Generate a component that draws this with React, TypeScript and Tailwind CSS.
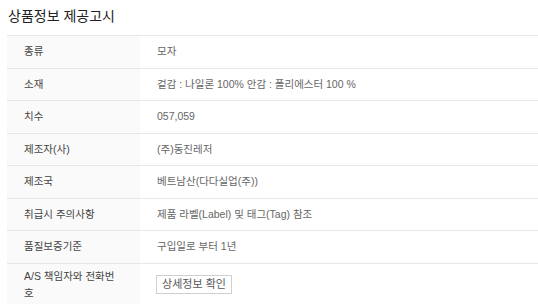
import React from "react";

const rows: { label: string; value: string }[] = [
  { label: "종류", value: "모자" },
  { label: "소재", value: "겉감 : 나일론 100% 안감 : 폴리에스터 100 %" },
  { label: "치수", value: "057,059" },
  { label: "제조자(사)", value: "(주)동진레저" },
  { label: "제조국", value: "베트남산(다다실업(주))" },
  { label: "취급시 주의사항", value: "제품 라벨(Label) 및 태그(Tag) 참조" },
  { label: "품질보증기준", value: "구입일로 부터 1년" },
];

const App: React.FC = () => {
  return (
    <div
      className="w-[538px] h-[304px] overflow-hidden bg-white pl-[7px]"
      style={{ fontFamily: '"Liberation Sans", "Noto Sans CJK KR", sans-serif' }}
    >
      <h2 className="pt-[7px] pl-[1px] text-[14px] leading-[18px] text-[#222]">상품정보 제공고시</h2>

      <div className="mt-[10px] border-t border-[#e8e8e8]">
        {rows.map((r) => (
          <div key={r.label} className="flex h-[32.5px] border-b border-[#e8e8e8] text-[10.5px] leading-[15px]">
            <div className="flex w-[133px] shrink-0 items-center bg-[#fafafa] px-[17px] text-[#444]">
              {r.label}
            </div>
            <div className="flex flex-1 items-center px-[17px] text-[#666]">{r.value}</div>
          </div>
        ))}
        <div className="flex h-[46px] border-b border-[#e8e8e8] text-[10.5px]">
          <div className="w-[133px] shrink-0 break-all bg-[#fafafa] pl-[17px] pr-[20px] pt-[4px] leading-[17px] text-[#444]">
            A/S 책임자와 전화번호
          </div>
          <div className="flex flex-1 items-center px-[16px] pb-[3px]">
            <button className="h-[19px] w-[76px] border border-[#cfcfcf] bg-white text-[11px] leading-[17px] text-[#555]">
              상세정보 확인
            </button>
          </div>
        </div>
      </div>
    </div>
  );
};

export default App;
